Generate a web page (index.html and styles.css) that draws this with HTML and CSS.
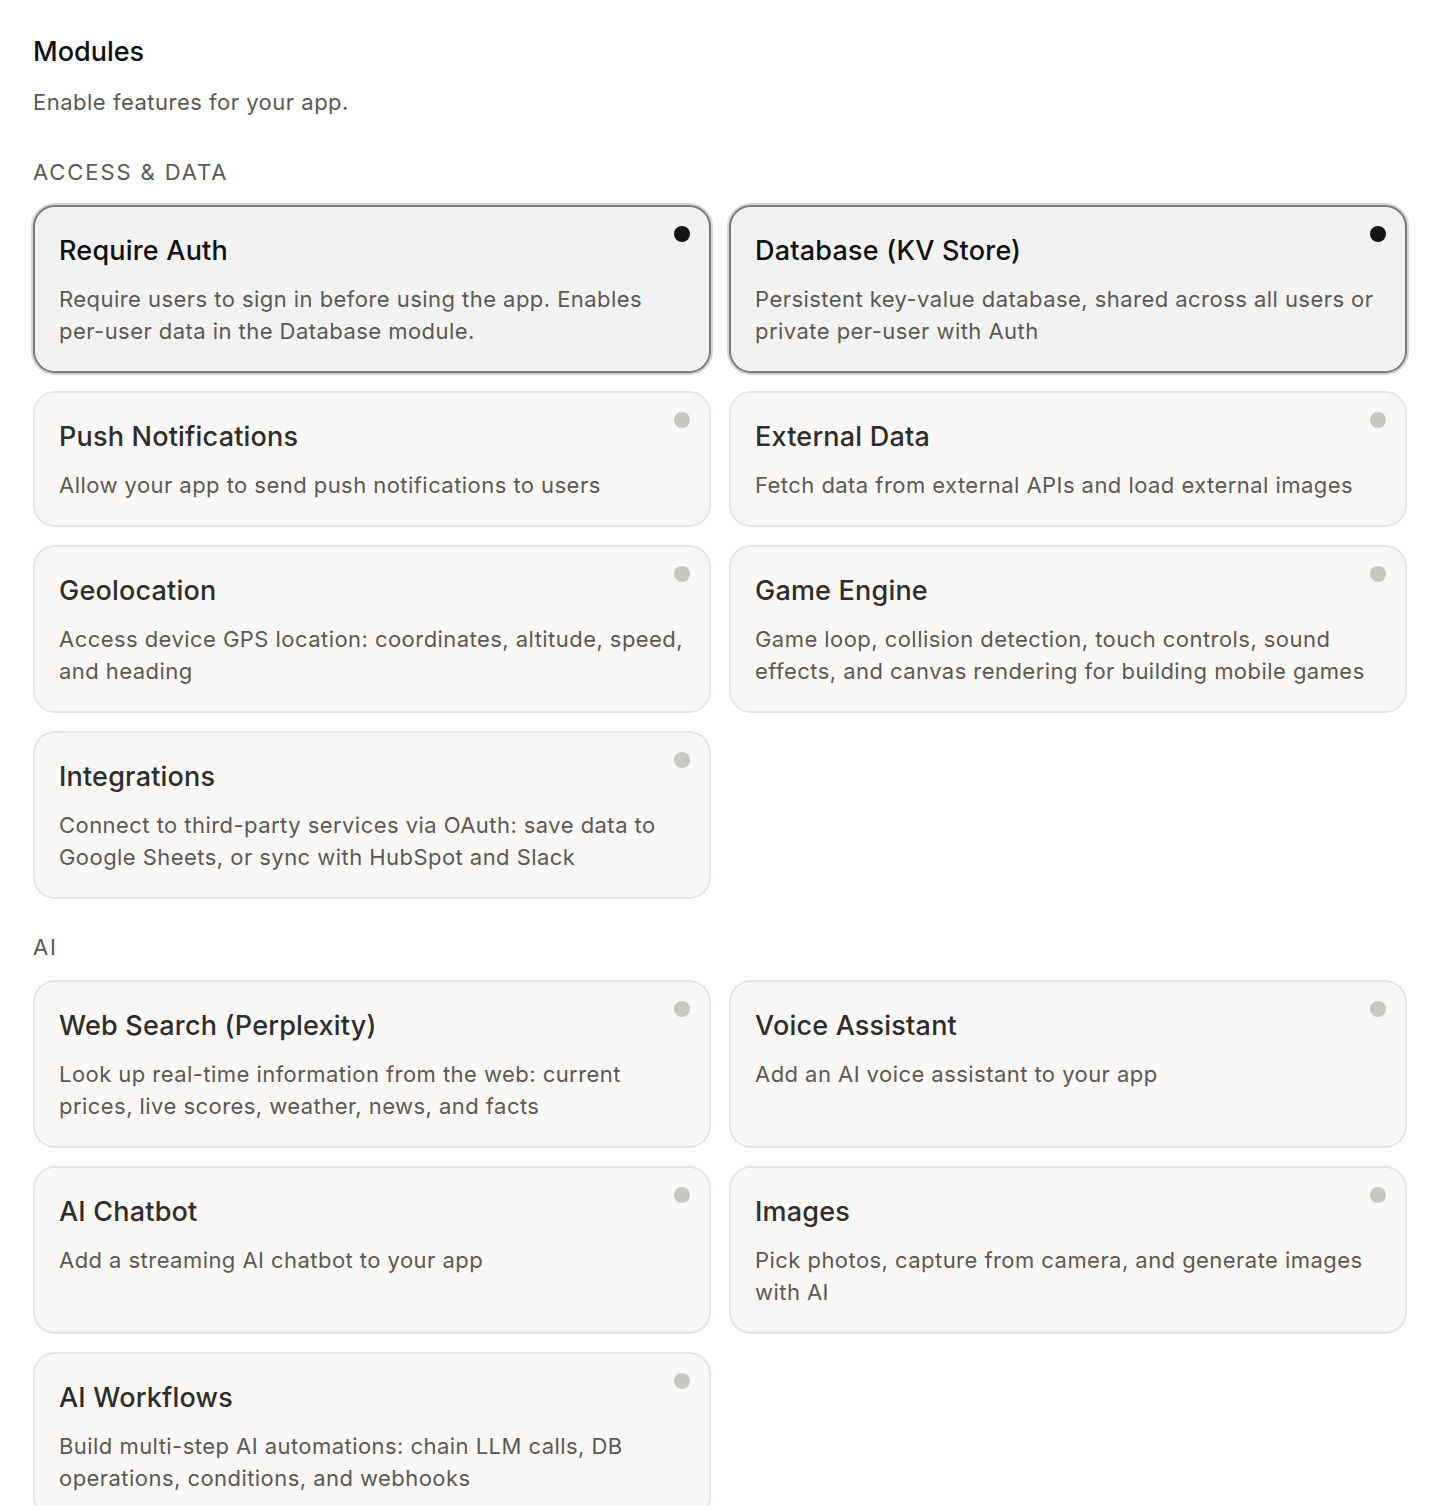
FILE: index.html
```html
<!DOCTYPE html>
<html lang="en">
<head>
    <meta charset="UTF-8">
    <meta name="viewport" content="width=device-width, initial-scale=1.0">
    <title>Modules</title>
    <link rel="stylesheet" href="styles.css">
</head>
<body>
    <main class="modules">
        <h1 class="page-title">Modules</h1>
        <p class="page-sub">Enable features for your app.</p>

        <!-- Access & data -->
        <section class="group">
            <h2 class="group-title">Access &amp; Data</h2>
            <div class="grid">
                <div class="card active">
                    <span class="dot"></span>
                    <h3>Require Auth</h3>
                    <p>Require users to sign in before using the app. Enables per-user data in the Database module.</p>
                </div>
                <div class="card active">
                    <span class="dot"></span>
                    <h3>Database (KV Store)</h3>
                    <p>Persistent key-value database, shared across all users or private per-user with Auth</p>
                </div>
                <div class="card">
                    <span class="dot"></span>
                    <h3>Push Notifications</h3>
                    <p>Allow your app to send push notifications to users</p>
                </div>
                <div class="card">
                    <span class="dot"></span>
                    <h3>External Data</h3>
                    <p>Fetch data from external APIs and load external images</p>
                </div>
                <div class="card">
                    <span class="dot"></span>
                    <h3>Geolocation</h3>
                    <p>Access device GPS location: coordinates, altitude, speed, and heading</p>
                </div>
                <div class="card">
                    <span class="dot"></span>
                    <h3>Game Engine</h3>
                    <p>Game loop, collision detection, touch controls, sound effects, and canvas rendering for building mobile games</p>
                </div>
                <div class="card">
                    <span class="dot"></span>
                    <h3>Integrations</h3>
                    <p>Connect to third-party services via OAuth: save data to Google Sheets, or sync with HubSpot and Slack</p>
                </div>
            </div>
        </section>

        <!-- AI -->
        <section class="group">
            <h2 class="group-title">AI</h2>
            <div class="grid">
                <div class="card">
                    <span class="dot"></span>
                    <h3>Web Search (Perplexity)</h3>
                    <p>Look up real-time information from the web: current prices, live scores, weather, news, and facts</p>
                </div>
                <div class="card">
                    <span class="dot"></span>
                    <h3>Voice Assistant</h3>
                    <p>Add an AI voice assistant to your app</p>
                </div>
                <div class="card">
                    <span class="dot"></span>
                    <h3>AI Chatbot</h3>
                    <p>Add a streaming AI chatbot to your app</p>
                </div>
                <div class="card">
                    <span class="dot"></span>
                    <h3>Images</h3>
                    <p>Pick photos, capture from camera, and generate images with AI</p>
                </div>
                <div class="card">
                    <span class="dot"></span>
                    <h3>AI Workflows</h3>
                    <p>Build multi-step AI automations: chain LLM calls, DB operations, conditions, and webhooks</p>
                </div>
            </div>
        </section>
    </main>
</body>
</html>
```

FILE: styles.css
```css
/* Modules settings page */
:root {
    --text: #1a1a1a;
    --muted: #5b5955;
    --card-bg: #f9f8f6;
    --card-border: #e8e6e3;
    --active-bg: #f2f2f2;
    --active-border: #7d7d7d;
    --dot-off: #c9c7c4;
}

* { margin: 0; padding: 0; box-sizing: border-box; }
body {
    font-family: Inter, "Noto Sans", sans-serif;
    background: #fff; color: var(--text);
}

.modules { padding: 35px 33px 40px; }

.page-title { font-size: 27px; line-height: 34px; font-weight: 500; color: #111; }
.page-sub {
    margin-top: 17px; font-size: 22px; line-height: 32px;
    letter-spacing: 0.5px; color: var(--muted);
}

/* Groups */
.group { margin-top: 38px; }
.group + .group { margin-top: 32px; }
.group-title {
    font-size: 22px; line-height: 32px; font-weight: 400;
    color: var(--muted); text-transform: uppercase; letter-spacing: 1.9px;
    margin-bottom: 17px;
}

.grid { display: grid; grid-template-columns: 1fr 1fr; gap: 18px; }

/* Cards */
.card {
    position: relative;
    background: var(--card-bg);
    border: 2px solid var(--card-border);
    border-radius: 22px;
    padding: 28px 22px 24px 24px;
}
.card h3 {
    font-size: 27px; line-height: 32px; font-weight: 500;
    letter-spacing: 0.2px; color: #2e2d2b;
}
.card p {
    margin-top: 16px; font-size: 22px; line-height: 32px;
    letter-spacing: 0.45px; color: var(--muted);
}

.card.active {
    background: var(--active-bg);
    border-color: var(--active-border);
    box-shadow: 0 0 0 2px #d4d4d4;
}
.card.active h3 { color: #111; }

.dot {
    position: absolute; top: 19px; right: 19px;
    width: 16px; height: 16px; border-radius: 50%;
    background: var(--dot-off);
}
.card.active .dot { background: #141414; }
```
